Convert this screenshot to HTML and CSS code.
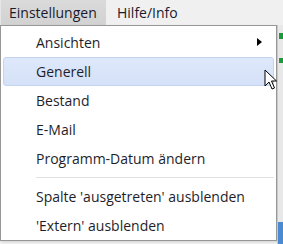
FILE: index.html
```html
<!DOCTYPE html>
<html>
<head>
<meta charset="utf-8">
<link rel="stylesheet" href="styles.css">
</head>
<body>
<div class="screen">
  <div class="menubar">
    <div class="mb-item active">Einstellungen</div>
    <div class="mb-item">Hilfe/Info</div>
  </div>
  <div class="body">
    <div class="dropdown">
      <div class="item has-sub">Ansichten<span class="arrow"></span></div>
      <div class="item hover">Generell</div>
      <div class="item">Bestand</div>
      <div class="item">E-Mail</div>
      <div class="item">Programm-Datum ändern</div>
      <div class="sep"></div>
      <div class="item">Spalte 'ausgetreten' ausblenden</div>
      <div class="item">'Extern' ausblenden</div>
    </div>
    <div class="behind">
      <div class="g g1"></div>
      <div class="g g2"></div>
      <div class="bl"></div>
    </div>
  </div>
  <svg class="cursor" width="14" height="22" viewBox="0 0 14 22"><path d="M1 1 L1 17 L5 13 L8 20 L10.5 19 L7.5 12 L12.5 12 Z" fill="#fff" stroke="#000" stroke-width="1" stroke-linejoin="miter"/></svg>
</div>
</body>
</html>
```
FILE: styles.css
```css
html, body { margin: 0; padding: 0; }
body { width: 283px; height: 244px; overflow: hidden; background: #f0f0f0; font-family: "Open Sans", "Noto Sans", sans-serif; }
.screen { position: relative; width: 283px; height: 244px; display: flex; flex-direction: column; }
.menubar { height: 25px; display: flex; background: #f0f0f0; }
.mb-item { padding: 0 8px 0 11px; font-size: 14px; line-height: 25px; color: #1a1a2e; }
.mb-item.active { background: linear-gradient(#dadada, #d2d2d2); width: 97px; padding: 0 0 0 8px; border-left: 1px solid #e6e6e6; }
.body { flex: 1; display: flex; }
.dropdown { width: 277px; height: 216px; background: #fff; border: 1px solid #979797; box-shadow: 1px 1px 2px rgba(0,0,0,0.12); padding: 2px 0 0 2px; box-sizing: border-box; }
.item { position: relative; height: 29px; line-height: 29px; font-size: 14px; color: #1e1e2a; padding-left: 33px; margin-right: 2px; box-sizing: border-box; }
.item.hover { background: linear-gradient(#dfe8fb, #d5e1f8); border: 1px solid #c4d3ee; border-radius: 3px; line-height: 27px; padding-left: 32px; }
.arrow { position: absolute; right: 12px; top: 10px; width: 0; height: 0; border-top: 4px solid transparent; border-bottom: 4px solid transparent; border-left: 5px solid #000; }
.sep { height: 1px; background: #e2e2e2; margin: 4px 2px 4px 33px; }
.behind { flex: 1; position: relative; background: #e8e8e8; border-left: 1px solid #c8c8c8; }
.g { position: absolute; left: 1px; width: 4px; background: #1a9a3a; }
.g1 { top: 8px; height: 6px; }
.g2 { top: 33px; height: 5px; }
.bl { position: absolute; left: 0; bottom: 0; width: 6px; height: 22px; background: #4a8ad0; }
.cursor { position: absolute; left: 264px; top: 69px; }
```
